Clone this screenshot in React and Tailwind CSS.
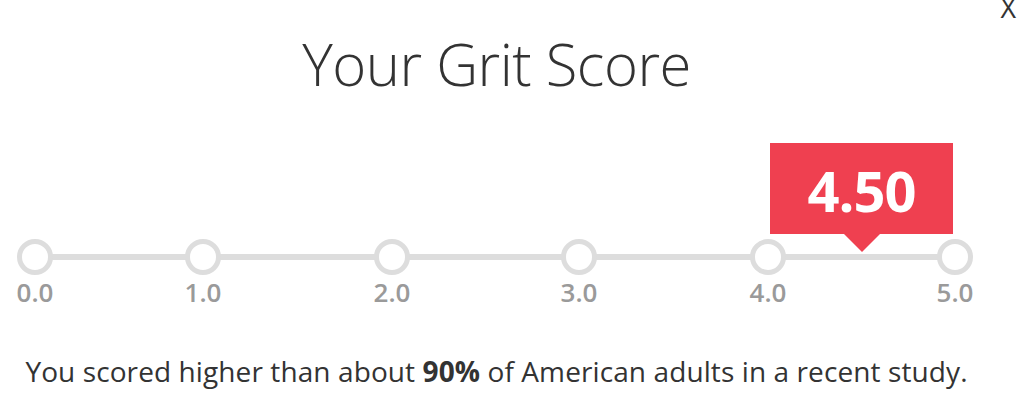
import React from "react";

const ticks = [
  { label: "0.0", ml: "ml-[17px]" },
  { label: "1.0", ml: "ml-[132px]" },
  { label: "2.0", ml: "ml-[153px]" },
  { label: "3.0", ml: "ml-[151px]" },
  { label: "4.0", ml: "ml-[153px]" },
  { label: "5.0", ml: "ml-[151px]" },
];

export default function App() {
  return (
    <div
      className="relative w-[1023px] h-[416px] bg-white overflow-hidden"
      style={{ fontFamily: '"Open Sans", "Noto Sans", sans-serif' }}
    >
      <button className="absolute top-[-6px] right-[7px] text-[27px] leading-none font-normal text-[#333]">
        X
      </button>
      <div className="w-[993px] flex flex-col items-center">
        <h1 className="mt-[35px] text-[58px] leading-none font-light text-[#333] tracking-[-0.5px]">
          Your Grit Score
        </h1>
        <div className="relative self-stretch mt-[146px]">
          <div className="absolute left-[35px] w-[920px] top-[15px] h-[6px] bg-[#dddddd]" />
          <div className="absolute left-[770px] top-[-96px] w-[183px] flex flex-col items-center">
            <div className="w-[183px] h-[91px] bg-[#ef4050] flex items-center justify-center">
              <span className="text-[56px] leading-none font-bold text-white tracking-[-1px] mt-[2px]">
                4.50
              </span>
            </div>
            <div className="w-0 h-0 border-l-[18px] border-r-[18px] border-t-[18px] border-l-transparent border-r-transparent border-t-[#ef4050]" />
          </div>
          <div className="relative flex">
            {ticks.map((t) => (
              <div key={t.label} className={`${t.ml} w-[36px] flex flex-col items-center`}>
                <div className="w-[36px] h-[36px] rounded-full border-[5px] border-[#dddddd] bg-white" />
                <span className="mt-[4px] text-[26px] leading-none font-semibold text-[#9a9a9a]">
                  {t.label}
                </span>
              </div>
            ))}
          </div>
        </div>
        <p className="mt-[52px] text-[28px] leading-none text-[#333] whitespace-nowrap tracking-[0.1px]">
          You scored higher than about <b className="font-bold">90%</b> of American adults in a recent study.
        </p>
      </div>
    </div>
  );
}
